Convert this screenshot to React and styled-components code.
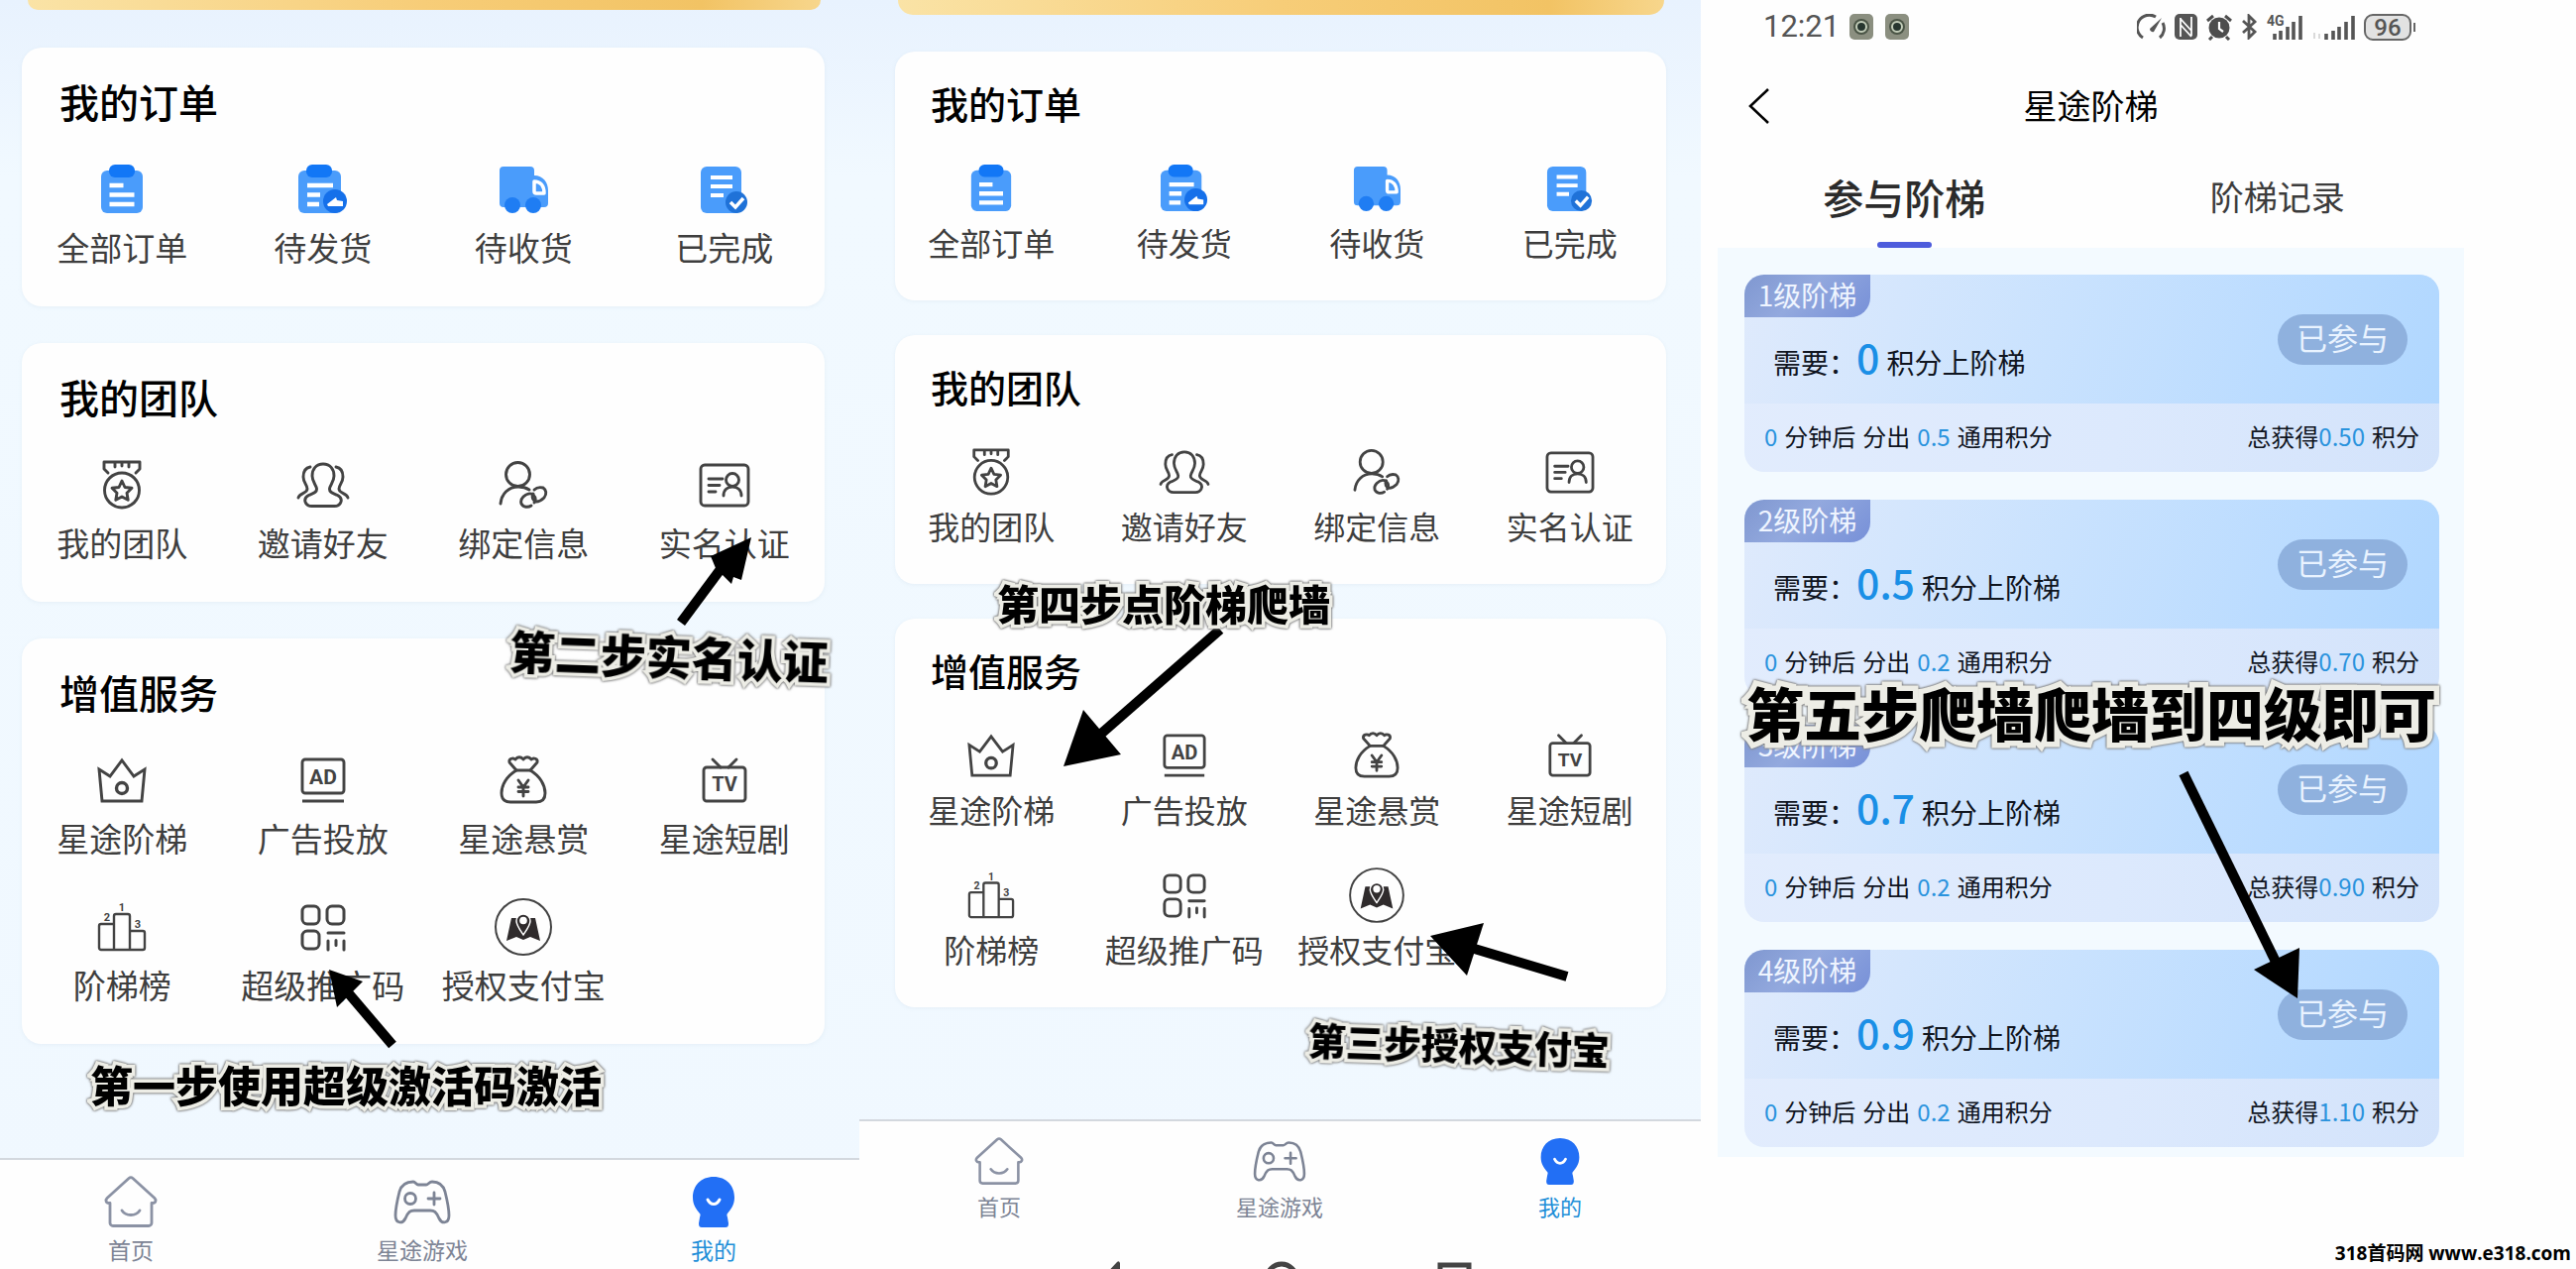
import React, { useState } from 'react';
import styled, { createGlobalStyle, ThemeProvider } from 'styled-components';

const GlobalStyle = createGlobalStyle`
  * {
    box-sizing: border-box;
  }

  body {
    margin: 0;
    background: #fefefe;
    font-family: 'Noto Sans CJK SC', 'Noto Sans', sans-serif;
    color: #000;
  }

  button {
    margin: 0;
    padding: 0;
    border: none;
    background: none;
    font: inherit;
    color: inherit;
    cursor: pointer;
  }
`;

// sizes of the two profile screens
const large = {
  banner: { height: 10, margin: '0 39px 38px 28px' },
  side: '0 35px 0 22px',
  cardGap: 37,
  cardPad: '26px 0 37px',
  titleSize: 40,
  titleLine: 56,
  titleGap: 36,
  titlePad: 38,
  icon: 50,
  iconGap: 10,
  label: 33,
  labelLine: 46,
  rowGap: 42,
  navPad: '16px 87px 6px 72px',
  navIcon: 52,
  navLabel: 23,
  navLine: 28,
};

const small = {
  banner: { height: 15, margin: '0 37px 37px 39px' },
  side: '0 35px 0 36px',
  cardGap: 35,
  cardPad: '25px 0 37px',
  titleSize: 38,
  titleLine: 54,
  titleGap: 35,
  titlePad: 36,
  icon: 48,
  iconGap: 8,
  label: 32,
  labelLine: 44,
  rowGap: 41,
  navPad: '16px 82px 43px 81px',
  navIcon: 48,
  navLabel: 22,
  navLine: 26,
};

const Board = styled.main`
  display: grid;
  grid-template-columns: 867fr 849fr 883fr;
  min-height: 100vh;
  overflow: hidden;
`;

const Screen = styled.section`
  position: relative;
  display: flex;
  flex-direction: column;
  min-width: 0;
  background: linear-gradient(#e8f2fe, #f1f9ff 14%, #f0f8ff);
`;

const Banner = styled.div`
  height: ${({ theme }) => theme.banner.height}px;
  margin: ${({ theme }) => theme.banner.margin};
  border-radius: 0 0 20px 20px;
  background: linear-gradient(90deg, #fae3a6, #f7cd78 50%, #f2c364 85%, #f7d68c);
`;

const Cards = styled.div`
  flex: 1;
  display: flex;
  flex-direction: column;
  gap: ${({ theme }) => theme.cardGap}px;
  padding: ${({ theme }) => theme.side};
`;

const Card = styled.section`
  padding: ${({ theme }) => theme.cardPad};
  border-radius: 20px;
  background: #fefefe;
  box-shadow: 0 1px 4px rgba(150, 170, 190, 0.12);
`;

const CardTitle = styled.h2`
  margin: 0 0 ${({ theme }) => theme.titleGap}px;
  padding-left: ${({ theme }) => theme.titlePad}px;
  font-size: ${({ theme }) => theme.titleSize}px;
  line-height: ${({ theme }) => theme.titleLine}px;
  font-weight: 500;
`;

const Menu = styled.div`
  display: grid;
  grid-template-columns: repeat(4, 1fr);
  row-gap: ${({ theme }) => theme.rowGap}px;
`;

const MenuItem = styled.button`
  display: flex;
  flex-direction: column;
  align-items: center;
  gap: ${({ theme }) => theme.iconGap}px;
  color: #3e3e3e;
  font-size: ${({ theme }) => theme.label}px;
  line-height: ${({ theme }) => theme.labelLine}px;
  white-space: nowrap;

  svg {
    width: ${({ theme }) => theme.icon}px;
    height: ${({ theme }) => theme.icon}px;
    overflow: visible;
  }
`;

const TabBar = styled.nav`
  display: flex;
  justify-content: space-between;
  padding: ${({ theme }) => theme.navPad};
  border-top: 2px solid #d3d8de;
  background: #fefefe;
`;

const TabItem = styled.button`
  display: flex;
  flex-direction: column;
  align-items: center;
  gap: 8px;
  width: 120px;
  color: ${({ $active }) => ($active ? '#1f8fd8' : '#7d8495')};
  font-size: ${({ theme }) => theme.navLabel}px;
  line-height: ${({ theme }) => theme.navLine}px;

  svg {
    width: ${({ theme }) => theme.navIcon}px;
    height: ${({ theme }) => theme.navIcon}px;
    overflow: visible;
  }
`;

const SystemKeys = styled.div`
  display: flex;
  justify-content: space-between;
  height: 8px;
  padding: 0 230px 0 240px;
  background: #fefefe;
  overflow: hidden;

  svg {
    flex: none;
    width: 36px;
    height: 36px;
  }
`;

// step captions and arrows drawn over the screens
const Caption = styled.p`
  position: absolute;
  z-index: 2;
  left: ${({ $x }) => $x}px;
  top: ${({ $y }) => $y}px;
  margin: 0;
  font-size: ${({ $size }) => $size}px;
  line-height: 1;
  font-weight: 900;
  white-space: nowrap;
  rotate: ${({ $tilt }) => $tilt || 0}deg;
  -webkit-text-stroke: ${({ $edge }) => $edge || 7}px #edede6;
  paint-order: stroke fill;
  filter: drop-shadow(0 0 1px #666) drop-shadow(0 0 1px #999);
  pointer-events: none;
`;

const ArrowBox = styled.svg`
  position: absolute;
  z-index: 1;
  left: ${({ $x }) => $x}px;
  top: ${({ $y }) => $y}px;
  pointer-events: none;
`;

const LadderScreen = styled.section`
  position: relative;
  display: flex;
  flex-direction: column;
  min-width: 0;
  background: #fefefe;
`;

const Phone = styled.div`
  margin: 0 113px 0 17px;
`;

const StatusBar = styled.div`
  display: flex;
  align-items: center;
  height: 54px;
  padding: 0 49px 0 46px;
  color: #555;
  font-family: Roboto, sans-serif;
  font-size: 31px;
  line-height: 54px;

  svg {
    flex: none;
  }
`;

const StatusApps = styled.div`
  display: flex;
  gap: 12px;
  margin-left: 10px;
`;

const StatusIcons = styled.div`
  display: flex;
  align-items: center;
  gap: 9px;
  margin-left: auto;
`;

const Battery = styled.span`
  display: flex;
  align-items: center;

  b {
    width: 48px;
    height: 27px;
    border: 2px solid #666;
    border-radius: 9px;
    background: #e2e2e2;
    font-size: 24px;
    font-weight: 500;
    line-height: 24px;
    text-align: center;
  }

  &::after {
    content: '';
    width: 2px;
    height: 9px;
    margin-left: 2px;
    background: #666;
  }
`;

const TitleBar = styled.header`
  display: grid;
  grid-template-columns: 60px 1fr 60px;
  align-items: center;
  height: 106px;
  padding: 0 20px;

  h1 {
    margin: 0;
    padding-bottom: 2px;
    font-size: 34px;
    line-height: 50px;
    font-weight: 400;
    text-align: center;
  }
`;

const BackButton = styled.button`
  display: flex;
  padding-left: 10px;
`;

const Tabs = styled.div`
  display: grid;
  grid-template-columns: 1fr 1fr;
  height: 90px;
`;

const Tab = styled.button`
  display: flex;
  flex-direction: column;
  align-items: center;
  justify-content: space-between;
  padding-top: 9px;
  color: ${({ $active }) => ($active ? '#2b2b2b' : '#3c3c3c')};
  font-size: ${({ $active }) => ($active ? 41 : 34)}px;
  font-weight: ${({ $active }) => ($active ? 500 : 400)};
  line-height: 58px;

  &::after {
    content: '';
    width: 55px;
    height: 6px;
    border-radius: 3px;
    background: ${({ $active }) => ($active ? '#4d5cdc' : 'transparent')};
  }
`;

const LadderList = styled.div`
  display: flex;
  flex-direction: column;
  gap: 28px;
  padding: 27px 25px 10px 27px;
  background: #f3faff;
`;

const Ladder = styled.article`
  border-radius: 20px;
  overflow: hidden;
  background: linear-gradient(100deg, #e2ecfd, #dce9fd 55%, #d3e3fb);
`;

const LadderTop = styled.div`
  display: flex;
  justify-content: space-between;
  height: 130px;
  background: linear-gradient(110deg, #dfeafc, #c9e2fe 45%, #b9dbff 80%, #b0d7ff);
`;

const Level = styled.h3`
  width: 127px;
  height: 43px;
  margin: 0;
  border-radius: 0 0 20px 0;
  background: linear-gradient(135deg, #7f97d0, #93a9de 45%, #7790d8);
  color: #eff5ff;
  font-size: 28px;
  font-weight: 400;
  line-height: 40px;
  text-align: center;
`;

const Need = styled.p`
  display: flex;
  align-items: baseline;
  margin: 9px 0 0 29px;
  color: #10151f;
  font-size: 28px;
  line-height: 60px;

  strong {
    margin-right: 7px;
    color: #1a8fe6;
    font-size: 41px;
    font-weight: 500;
  }
`;

const JoinedButton = styled.button`
  width: 131px;
  height: 51px;
  margin: 40px 32px 0 0;
  padding-bottom: 6px;
  border-radius: 26px;
  background: #8fb1de;
  color: #e9f3ff;
  font-size: 31px;
  line-height: 45px;
`;

const LadderBottom = styled.div`
  display: flex;
  justify-content: space-between;
  height: 69px;
  padding: 0 20px;
  color: #10151f;
  font-size: 24px;
  line-height: 66px;
`;

const Points = styled.div`
  display: flex;
  gap: 7px;
`;

const Amount = styled.span`
  color: #2a93dd;
`;

const SiteMark = styled.footer`
  margin-top: auto;
  padding: 0 5px 6px;
  font-family: 'Open Sans', 'Noto Sans CJK SC', sans-serif;
  font-size: 19px;
  font-weight: 700;
  line-height: 20px;
  text-align: right;
`;

const Line = ({ children, width = 2.9 }) => (
  <svg viewBox="0 0 50 50" fill="none" stroke="#434343" strokeWidth={width} strokeLinejoin="round" strokeLinecap="round" aria-hidden="true">
    {children}
  </svg>
);

const Fill = ({ children }) => (
  <svg viewBox="0 0 50 50" aria-hidden="true">
    {children}
  </svg>
);

const icons = {
  all: (
    <Fill>
      <rect x="4" y="6" width="42" height="43" rx="6" fill="#4a9cfb" />
      <rect x="12" y="0" width="26" height="13" rx="6" fill="#1277f6" />
      <path d="M12.500 21h14M12.500 30.500h25M12.500 40h25" stroke="#fff" strokeWidth="4.500" />
    </Fill>
  ),
  send: (
    <Fill>
      <rect x="0" y="6" width="43" height="43" rx="6" fill="#4a9cfb" />
      <rect x="8" y="0" width="26" height="13" rx="6" fill="#1277f6" />
      <path d="M9 21h26M9 30.500h13M9 40h12" stroke="#fff" strokeWidth="4.500" />
      <circle cx="37" cy="37" r="12" fill="#1570ea" />
      <path d="M29 40l9-7 1 3 6 1v5H30z" fill="#fff" />
    </Fill>
  ),
  truck: (
    <Fill>
      <path d="M5 2h27a4 4 0 0 1 4 4v5c9 0 14 7 14 15v13a4 4 0 0 1-4 4H5a4 4 0 0 1-4-4V6a4 4 0 0 1 4-4z" fill="#4a9cfb" />
      <path d="M36 17c6 0 10 4 10 12h-8a2 2 0 0 1-2-2z" fill="#4a9cfb" stroke="#fff" strokeWidth="3.500" strokeLinejoin="round" />
      <circle cx="14" cy="41" r="8" fill="#1f7df3" />
      <circle cx="35" cy="41" r="8" fill="#1f7df3" />
    </Fill>
  ),
  done: (
    <Fill>
      <rect x="1" y="2" width="41" height="47" rx="6" fill="#4a9cfb" />
      <path d="M11 13h22M11 22h22M11 31h13" stroke="#fff" strokeWidth="4" />
      <circle cx="37" cy="38" r="11" fill="#1f72d8" />
      <path d="M31 38l5 5 8-9" fill="none" stroke="#fff" strokeWidth="3.500" />
    </Fill>
  ),
  medal: (
    <Line>
      <path d="M11 13 7 9V2h36v7l-4 4M18 2v5M25 2v4M32 2v5" />
      <circle cx="25" cy="30.500" r="17.500" />
      <path d="m25 21 3 6.500 7 .8-5 5 1.200 7L25 37l-6.200 3.300 1.200-7-5-5 7-.8z" />
    </Line>
  ),
  friends: (
    <Line>
      <path d="M25 4c7 0 11 5 11 12 0 6-4 9-4.500 13-.3 4 4 4.500 8 6.500 7 4 3 11-3 11h-23c-6 0-10-7-3-11 4-2 8.300-2.500 8-6.500-.5-4-4.500-7-4.500-13 0-7 4-12 11-12z" />
      <path d="M12 7C6 8 5 13 5 17c0 6 4 8 4 12 0 5-8 4-9 9M38 7c6 1 7 6 7 10 0 6-4 8-4 12 0 5 8 4 9 9" />
    </Line>
  ),
  bind: (
    <Line>
      <circle cx="19.500" cy="14.500" r="12" />
      <path d="M2 44c1-10 8-17 18-17 4 0 8 1 11 3" />
      <path d="M33 46c-3 2-8 2-10-2-1-3 0-5 2-7 3-3 7-4 10-2 3 3 3 5 1 8" />
      <path d="M35 34c-2 4 0 7 3 8 3 0 5-1 8-4 3-4 2-8-1-10-4-1-7 0-9 2" />
    </Line>
  ),
  card: (
    <Line>
      <rect x="1" y="5" width="48" height="41" rx="4" />
      <circle cx="33" cy="20" r="6.500" />
      <path d="M24 36c0-6 4-9 9-9s9 3 9 9M9 19h14M9 25.500h11M9 32h7" />
    </Line>
  ),
  crown: (
    <Line>
      <path d="M2 14l11 7L25 5l12 16 11-7-3 32H5z" strokeLinejoin="miter" />
      <circle cx="25" cy="33" r="5.500" strokeWidth="3.400" />
    </Line>
  ),
  ad: (
    <Line>
      <rect x="4" y="4" width="42" height="34" rx="3" />
      <path d="M4 46h42" strokeLinecap="butt" />
      <text x="25" y="29" textAnchor="middle" fill="#434343" stroke="none" fontFamily="Roboto, sans-serif" fontWeight="700" fontSize="21">AD</text>
    </Line>
  ),
  bag: (
    <Line>
      <path d="M18 15 11 7c-1-4 4-5 6-3 2-3 6-3 8 0 2-3 6-3 8 0 2-2 7-1 6 3l-7 8z" />
      <path d="M18 15C8 21 3 30 3 38c0 7 4 9 9 9h26c5 0 9-2 9-9 0-8-5-17-15-23" />
      <path d="M20 25l5 7 5-7M25 32v9M20 32h10M20 36.500h10" />
    </Line>
  ),
  tv: (
    <Line>
      <rect x="4" y="12" width="42" height="34" rx="3" />
      <path d="M13 4l8 8M37 4l-8 8" />
      <text x="25" y="36" textAnchor="middle" fill="#434343" stroke="none" fontFamily="Roboto, sans-serif" fontWeight="700" fontSize="20">TV</text>
    </Line>
  ),
  rank: (
    <Line width={2.4}>
      <path d="M17 48H4a2 2 0 0 1-2-2V24a2 2 0 0 1 2-2h13zM17 48V14a2 2 0 0 1 2-2h12a2 2 0 0 1 2 2v34zM33 29h13a2 2 0 0 1 2 2v15a2 2 0 0 1-2 2H33z" />
      <g fill="#434343" stroke="none" fontFamily="Roboto, sans-serif" fontWeight="700" fontSize="11" textAnchor="middle">
        <text x="10" y="19">2</text>
        <text x="25" y="9">1</text>
        <text x="41" y="26">3</text>
      </g>
    </Line>
  ),
  code: (
    <Line width={3}>
      <rect x="4" y="4" width="17" height="18" rx="5" />
      <rect x="29" y="4" width="17" height="18" rx="5" />
      <rect x="4" y="29" width="17" height="18" rx="5" />
      <path d="M30 31h16M30 39v9M38 38.500v5M46 39v9" />
    </Line>
  ),
  map: (
    <Line width={2}>
      <circle cx="25" cy="25" r="28" />
      <path d="M13 16h5l7 17 7-17h5l5 23-10-4-7 3-7-3-10 4z" fill="#2f2b2c" stroke="none" />
      <path d="M25 33c-4-6-7-10-7-14a7 7 0 0 1 14 0c0 4-3 8-7 14z" fill="#2f2b2c" stroke="#fff" strokeWidth="1.500" />
      <circle cx="25" cy="18.500" r="3.800" fill="#fff" stroke="none" />
    </Line>
  ),
};

const HomeIcon = () => (
  <svg viewBox="0 0 52 52" fill="none" stroke="#8b92a4" strokeWidth="2.800" strokeLinejoin="round" strokeLinecap="round" aria-hidden="true">
    <path d="M24 2.500a3 3 0 0 1 4 0l22 20c2 2 1 5-2 5h-1v20a3 3 0 0 1-3 3H8a3 3 0 0 1-3-3v-20H4c-3 0-4-3-2-5z" />
    <path d="M17 35c4 6 14 6 18 0" />
  </svg>
);

const GameIcon = () => (
  <svg viewBox="0 0 52 52" fill="none" stroke="#7d8495" strokeWidth="2.800" strokeLinejoin="round" strokeLinecap="round" aria-hidden="true">
    <path d="M17 6c2 0 3 3 5 3h8c2 0 3-3 6-3 7 0 11 3 13 10 2 8 4 17 4 24 0 8-7 9-10 3-3-7-5-8-9-8H18c-4 0-6 1-9 8-3 6-10 5-10-3 0-7 2-16 4-24C5 9 9 6 17 6z" />
    <circle cx="14" cy="23" r="5.500" />
    <path d="M38 17v12M32 23h12" />
  </svg>
);

const MeIcon = () => (
  <svg viewBox="0 0 52 52" aria-hidden="true">
    <path d="M26 1c13 0 21 9 21 21 0 8-4 12-7 16-1 1-.5 2 0 4l1 6c0 3-1 4-3 4H14c-2 0-3-1-3-4l1-6c.5-2 1-3 0-4-3-4-7-8-7-16C5 10 13 1 26 1z" fill="#226ff5" />
    <path d="M20 24c3 6 9 6 12 0" fill="none" stroke="#fff" strokeWidth="3" strokeLinecap="round" />
  </svg>
);

const sections = [
  {
    title: '我的订单',
    items: [['all', '全部订单'], ['send', '待发货'], ['truck', '待收货'], ['done', '已完成']],
  },
  {
    title: '我的团队',
    items: [['medal', '我的团队'], ['friends', '邀请好友'], ['bind', '绑定信息'], ['card', '实名认证']],
  },
  {
    title: '增值服务',
    items: [
      ['crown', '星途阶梯'],
      ['ad', '广告投放'],
      ['bag', '星途悬赏'],
      ['tv', '星途短剧'],
      ['rank', '阶梯榜'],
      ['code', '超级推广码'],
      ['map', '授权支付宝'],
    ],
  },
];

const ladders = [
  { level: 1, need: '0', share: '0.5', total: '0.50' },
  { level: 2, need: '0.5', share: '0.2', total: '0.70' },
  { level: 3, need: '0.7', share: '0.2', total: '0.90' },
  { level: 4, need: '0.9', share: '0.2', total: '1.10' },
];

const ProfileScreen = ({ sizes, systemKeys, children }) => (
  <ThemeProvider theme={sizes}>
    <Screen>
      <Banner />
      <Cards>
        {sections.map((section) => (
          <Card key={section.title}>
            <CardTitle>{section.title}</CardTitle>
            <Menu>
              {section.items.map(([icon, label]) => (
                <MenuItem key={label}>
                  {icons[icon]}
                  {label}
                </MenuItem>
              ))}
            </Menu>
          </Card>
        ))}
      </Cards>
      <TabBar>
        <TabItem><HomeIcon />首页</TabItem>
        <TabItem><GameIcon />星途游戏</TabItem>
        <TabItem $active><MeIcon />我的</TabItem>
      </TabBar>
      {systemKeys && (
        <SystemKeys>
          <svg viewBox="0 0 36 36" aria-hidden="true"><path d="M20 1q2-2 3 1v32L4 18z" fill="#444" /></svg>
          <svg viewBox="0 0 36 36" aria-hidden="true"><circle cx="14" cy="18" r="15" fill="none" stroke="#444" strokeWidth="5" /></svg>
          <svg viewBox="0 0 36 36" aria-hidden="true"><rect x="3" y="4" width="29" height="28" fill="none" stroke="#444" strokeWidth="5" /></svg>
        </SystemKeys>
      )}
      {children}
    </Screen>
  </ThemeProvider>
);

const Arrow = ({ x, y, width, height, shaft, head }) => (
  <ArrowBox $x={x} $y={y} width={width} height={height} aria-hidden="true">
    <path d={shaft} stroke="#000" strokeWidth="10" />
    <path d={head} />
  </ArrowBox>
);

const AppBadge = () => (
  <svg width="24" height="26" viewBox="0 0 24 26" aria-hidden="true">
    <rect width="24" height="26" rx="5" fill="#8b8f80" />
    <circle cx="12" cy="13" r="8" fill="#4b5546" />
    <circle cx="12" cy="13" r="5" fill="#27362f" stroke="#c3cdb9" strokeWidth="2" />
  </svg>
);

const PhoneStatus = () => (
  <StatusBar>
    12:21
    <StatusApps>
      <AppBadge />
      <AppBadge />
    </StatusApps>
    <StatusIcons>
      <svg width="29" height="26" viewBox="0 0 29 26" fill="none" stroke="#555" strokeWidth="3" aria-hidden="true">
        <path d="M6 24A12 12 0 0 1 19 3M26 9a12 12 0 0 1-3 15" />
        <path d="M25 4 17 18a3 3 0 0 1-4-3z" fill="#555" stroke="none" />
      </svg>
      <svg width="23" height="26" viewBox="0 0 23 26" aria-hidden="true">
        <rect width="23" height="26" rx="5" fill="#555" />
        <path d="M6 23V4M17 3v19M6 5l11 12M6 11l11 12" fill="none" stroke="#fff" strokeWidth="1.800" />
      </svg>
      <svg width="26" height="27" viewBox="0 0 26 27" aria-hidden="true">
        <circle cx="13" cy="14" r="10.500" fill="#4d4d4d" />
        <path d="M1 7l6-5M25 7l-6-5M6 23l-3 3M20 23l3 3" stroke="#4d4d4d" strokeWidth="3" />
        <path d="M13 8v7l4 3" fill="none" stroke="#fff" strokeWidth="2.200" />
      </svg>
      <svg width="17" height="26" viewBox="0 0 17 26" fill="none" stroke="#555" strokeWidth="2.800" aria-hidden="true">
        <path d="M2 7l12 11-6 6V2l6 6L2 19" />
      </svg>
      <svg width="36" height="28" viewBox="0 0 36 28" aria-hidden="true">
        <path d="M8 27v-6M14 27v-9M21 27V14M27 27V9M34 27V3" stroke="#555" strokeWidth="3.600" />
        <text x="0" y="13" fill="#555" fontFamily="Roboto, sans-serif" fontWeight="700" fontSize="14">4G</text>
      </svg>
      <svg width="44" height="28" viewBox="0 0 44 28" aria-hidden="true">
        <path d="M3 26v-6M8 26v-5" stroke="#dadada" strokeWidth="2" />
        <path d="M15 27v-6M22 27v-9M28 27V14M35 27V9M42 27V3" stroke="#555" strokeWidth="3.600" />
      </svg>
      <Battery><b>96</b></Battery>
    </StatusIcons>
  </StatusBar>
);

const LadderPage = () => {
  const [tab, setTab] = useState('join');

  return (
    <Phone>
      <PhoneStatus />
      <TitleBar>
        <BackButton aria-label="返回">
          <svg width="24" height="38" viewBox="0 0 24 38" fill="none" stroke="#000" strokeWidth="2.600" aria-hidden="true">
            <path d="M21 2 3 19l18 17" />
          </svg>
        </BackButton>
        <h1>星途阶梯</h1>
      </TitleBar>
      <Tabs role="tablist">
        <Tab role="tab" aria-selected={tab === 'join'} $active={tab === 'join'} onClick={() => setTab('join')}>参与阶梯</Tab>
        <Tab role="tab" aria-selected={tab === 'log'} $active={tab === 'log'} onClick={() => setTab('log')}>阶梯记录</Tab>
      </Tabs>
      <LadderList>
        {ladders.map((item) => (
          <Ladder key={item.level}>
            <LadderTop>
              <div>
                <Level>{item.level}级阶梯</Level>
                <Need>需要：<strong>{item.need}</strong>积分上阶梯</Need>
              </div>
              <JoinedButton>已参与</JoinedButton>
            </LadderTop>
            <LadderBottom>
              <Points>
                <Amount>0</Amount>
                <span>分钟后</span>
                <span>分出</span>
                <Amount>{item.share}</Amount>
                <span>通用积分</span>
              </Points>
              <Points>
                <span>总获得<Amount>{item.total}</Amount></span>
                <span>积分</span>
              </Points>
            </LadderBottom>
          </Ladder>
        ))}
      </LadderList>
    </Phone>
  );
};

const App = () => (
  <>
    <GlobalStyle />
    <Board>
      <ProfileScreen sizes={large}>
        <Arrow x={680} y={536} width={84} height={98} shaft="M7 92 53 30" head="M78 6 37 25l5 12 16 16 2-7 8 3z" />
        <Caption $x={514} $y={637} $size={46} $tilt={2}>第二步实名认证</Caption>
        <Arrow x={326} y={972} width={78} height={88} shaft="M70 82 24 28" head="M6 6l34 12-26 26z" />
        <Caption $x={91} $y={1072} $size={43}>第一步使用超级激活码激活</Caption>
      </ProfileScreen>

      <ProfileScreen sizes={small} systemKeys>
        <Caption $x={139} $y={587} $size={42}>第四步点阶梯爬墙</Caption>
        <Arrow x={200} y={628} width={172} height={152} shaft="M164 7 36 119" head="M6 145l20-57 38 45z" />
        <Arrow x={570} y={924} width={152} height={68} shaft="M144 61 44 31" head="M6 20 60 7 43 60z" />
        <Caption $x={453} $y={1034} $size={38} $tilt={2}>第三步授权支付宝</Caption>
      </ProfileScreen>

      <LadderScreen>
        <LadderPage />
        <Caption $x={46} $y={689} $size={58} $edge={11}>第五步爬墙爬墙到四级即可</Caption>
        <Arrow x={480} y={774} width={130} height={240} shaft="M7 6 100 196" head="M122 233 78 204l46-22z" />
        <SiteMark>318首码网 www.e318.com</SiteMark>
      </LadderScreen>
    </Board>
  </>
);

export default App;
